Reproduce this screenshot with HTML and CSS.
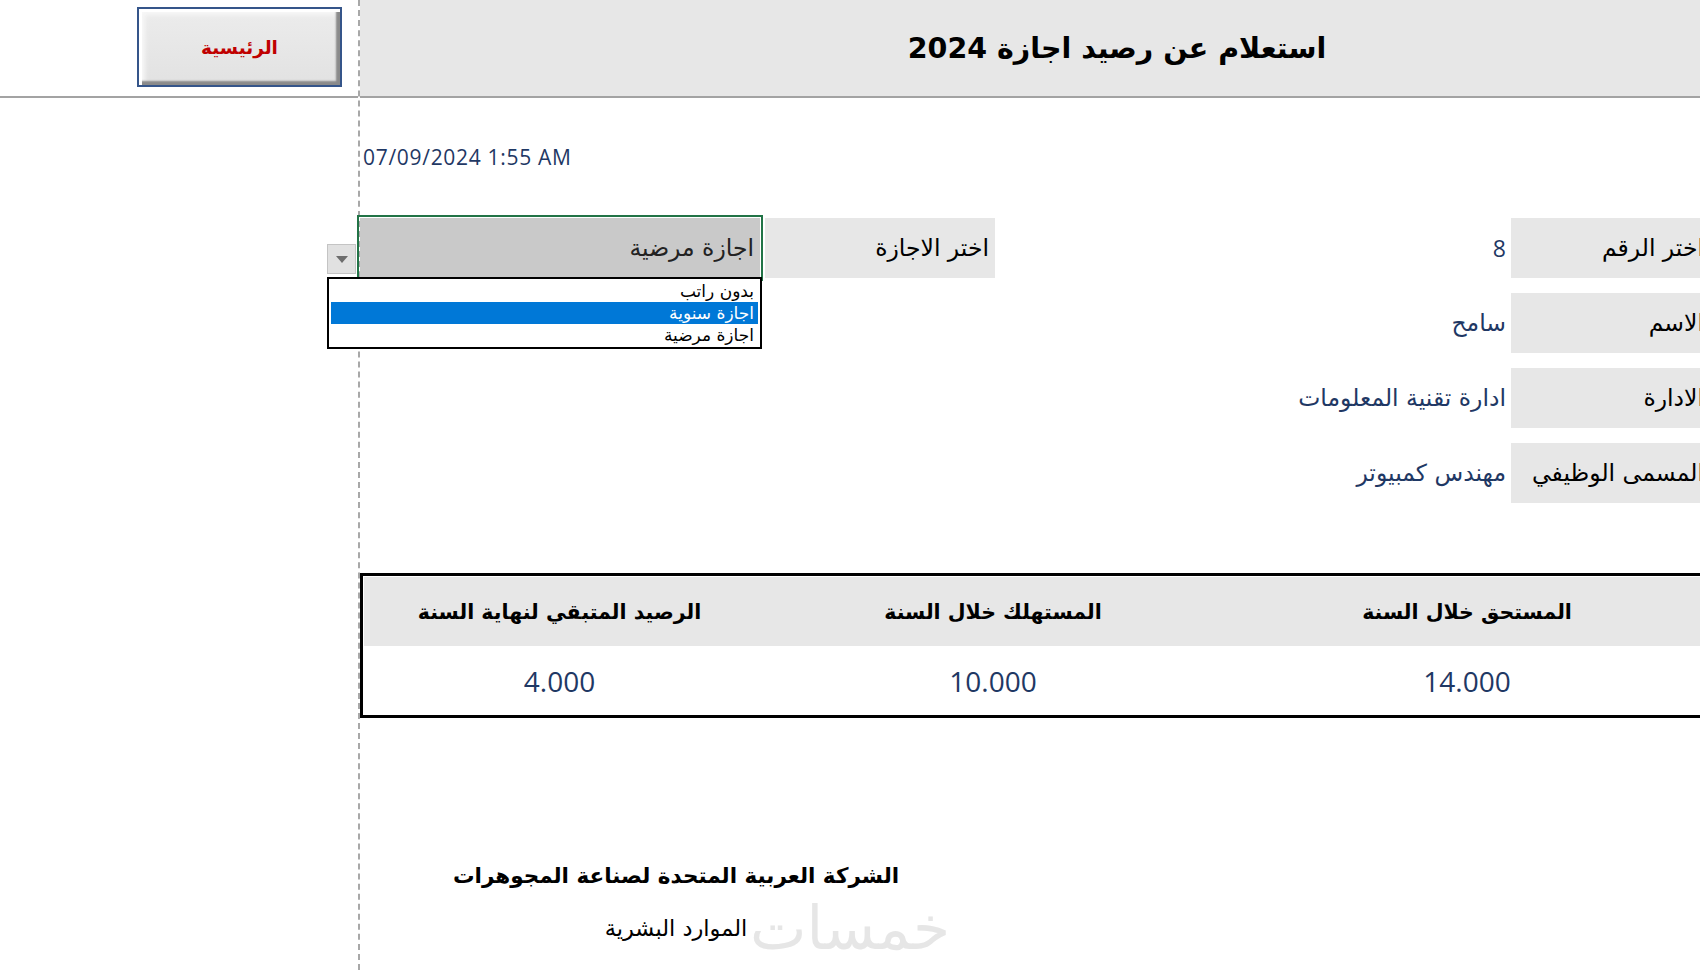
FILE: index.html
```html
<!DOCTYPE html>
<html lang="ar">
<head>
<meta charset="utf-8">
<title>استعلام عن رصيد اجازة 2024</title>
<link rel="stylesheet" href="styles.css">
</head>
<body>
<div class="sheet">
  <aside class="left">
    <div class="left-top">
      <button class="home-btn" type="button" dir="rtl">الرئيسية</button>
    </div>
  </aside>
  <main class="main">
    <header class="title-bar">
      <h1 class="title" dir="rtl">استعلام عن رصيد اجازة 2024</h1>
    </header>

    <div class="date">07/09/2024 1:55 AM</div>

    <section class="form">
      <div class="cell select-cell" dir="rtl">
        <span>اجازة مرضية</span>
        <span class="dd-arrow"><svg width="12" height="7" viewBox="0 0 12 7"><path d="M0 0 L12 0 L6 7 Z" fill="#6d6d6d"/></svg></span>
        <ul class="dd-list" dir="rtl">
          <li>بدون راتب</li>
          <li class="active">اجازة سنوية</li>
          <li>اجازة مرضية</li>
        </ul>
      </div>
      <div class="cell label leave-label" dir="rtl">اختر الاجازة</div>
      <div class="cell value r1" dir="rtl">8</div>
      <div class="cell label side r1" dir="rtl">اختر الرقم</div>

      <div class="cell value r2" dir="rtl">سامح</div>
      <div class="cell label side r2" dir="rtl">الاسم</div>

      <div class="cell value r3" dir="rtl">ادارة تقنية المعلومات</div>
      <div class="cell label side r3" dir="rtl">الادارة</div>

      <div class="cell value r4" dir="rtl">مهندس كمبيوتر</div>
      <div class="cell label side r4" dir="rtl">المسمى الوظيفي</div>
    </section>

    <section class="balance">
      <div class="bal-grid">
        <div class="bh" dir="rtl">الرصيد المتبقي لنهاية السنة</div>
        <div class="bh" dir="rtl">المستهلك خلال السنة</div>
        <div class="bh" dir="rtl">المستحق خلال السنة</div>
        <div class="bh"></div>
        <div class="bv">4.000</div>
        <div class="bv">10.000</div>
        <div class="bv">14.000</div>
        <div class="bv"></div>
      </div>
    </section>

    <footer class="footer">
      <div class="company" dir="rtl">الشركة العربية المتحدة لصناعة المجوهرات</div>
      <div class="dept" dir="rtl">الموارد البشرية</div>
      <div class="watermark" dir="rtl">خمسات</div>
    </footer>
  </main>
</div>
</body>
</html>
```
FILE: styles.css
```css
html, body {
  margin: 0;
  padding: 0;
  background: #ffffff;
}
body {
  width: 1700px;
  height: 970px;
  overflow: hidden;
  font-family: "Open Sans", "DejaVu Sans", sans-serif;
  color: #000;
}
.sheet {
  display: flex;
  width: 1700px;
  height: 970px;
}
.left {
  width: 358px;
  flex: none;
  border-right: 2px dashed #a8a8a8;
}
.left-top {
  height: 96px;
  border-bottom: 2px solid #a3a3a3;
  box-sizing: content-box;
}
.home-btn {
  margin: 7px 0 0 137px;
  width: 205px;
  height: 80px;
  background: linear-gradient(#ececec, #e2e2e2);
  border: 2px solid #35558a;
  box-shadow: inset 3px 3px 0 #ffffff, inset -4px -4px 2px #8a8a8a, inset 6px 6px 4px #f7f7f7;
  color: #c00000;
  font-family: "DejaVu Sans", sans-serif;
  font-weight: bold;
  font-size: 18.5px;
  padding: 0;
  cursor: pointer;
}
.main {
  flex: 1;
  min-width: 0;
  position: relative;
}
.title-bar {
  height: 96px;
  background: #e7e7e7;
  border-bottom: 2px solid #a3a3a3;
  display: flex;
  align-items: center;
  justify-content: center;
  padding-left: 174px;
}
.title {
  margin: 0;
  font-family: "DejaVu Sans", sans-serif;
  font-weight: bold;
  font-size: 28.5px;
  color: #000;
}
.date {
  margin-top: 47px;
  padding-left: 3px;
  height: 24px;
  line-height: 24px;
  font-size: 21px;
  letter-spacing: 0.7px;
  color: #1f3864;
}
.form {
  margin-top: 49px;
  display: grid;
  grid-template-columns: 403px 232px 516px 220px;
  grid-auto-rows: 60px;
  row-gap: 15px;
}
.cell {
  display: flex;
  align-items: center;
  font-family: "DejaVu Sans", sans-serif;
  font-size: 23.5px;
  white-space: nowrap;
}
.select-cell {
  grid-column: 1;
  grid-row: 1;
  margin-right: 3px;
  background: #c9c9c9;
  outline: 2px solid #217346;
  outline-offset: 1px;
  padding-right: 6px;
  color: #222;
  position: relative;
}
.leave-label {
  grid-column: 2;
  grid-row: 1;
  margin-left: 2px;
  padding-right: 6px;
}
.label {
  background: #e7e7e7;
  color: #000;
}
.value {
  grid-column: 3;
  padding-right: 5px;
  color: #1f3864;
}
.side {
  grid-column: 4;
  padding-right: 27px;
  width: 220px;
  box-sizing: border-box;
}
.r1 { grid-row: 1; }
.r2 { grid-row: 2; }
.r3 { grid-row: 3; }
.r4 { grid-row: 4; }
.value.r1 { font-family: "Open Sans", sans-serif; font-size: 23px; }

.dd-arrow {
  position: absolute;
  left: -33px;
  top: 26px;
  width: 27px;
  height: 28px;
  background: #e1e1e1;
  border: 1px solid #c4c4c4;
  display: flex;
  align-items: center;
  justify-content: center;
}
.dd-list {
  position: absolute;
  left: -33px;
  top: 59px;
  width: 427px;
  margin: 0;
  padding: 1px 2px;
  list-style: none;
  background: #fff;
  border: 2px solid #000;
  z-index: 2;
}
.dd-list li {
  height: 22px;
  line-height: 22px;
  font-size: 17px;
  padding-right: 4px;
  color: #000;
}
.dd-list li.active {
  background: #0078d7;
  color: #fff;
}

.balance {
  margin-top: 70px;
  width: 1400px;
  border: 3px solid #000;
  border-right: none;
  padding: 1px 0 0 1px;
}
.bal-grid {
  display: grid;
  grid-template-columns: 391px 476px 472px 1fr;
  grid-template-rows: 69px 69px;
}
.bh {
  background: #e7e7e7;
  display: flex;
  align-items: center;
  justify-content: center;
  font-family: "DejaVu Sans", sans-serif;
  font-weight: bold;
  font-size: 20.5px;
  white-space: nowrap;
}
.bv {
  display: flex;
  align-items: center;
  justify-content: center;
  font-size: 28px;
  color: #1f3864;
}
.footer {
  position: relative;
  margin-top: 141px;
  width: 632px;
  text-align: center;
  font-family: "DejaVu Sans", sans-serif;
}
.company {
  font-weight: bold;
  font-size: 21.5px;
  line-height: 34px;
}
.dept {
  margin-top: 18px;
  font-size: 22.5px;
  line-height: 34px;
}
.watermark {
  position: absolute;
  left: 378px;
  top: 38px;
  width: 224px;
  font-size: 60px;
  line-height: 62px;
  color: #e6e6e6;
  text-align: center;
}
```
